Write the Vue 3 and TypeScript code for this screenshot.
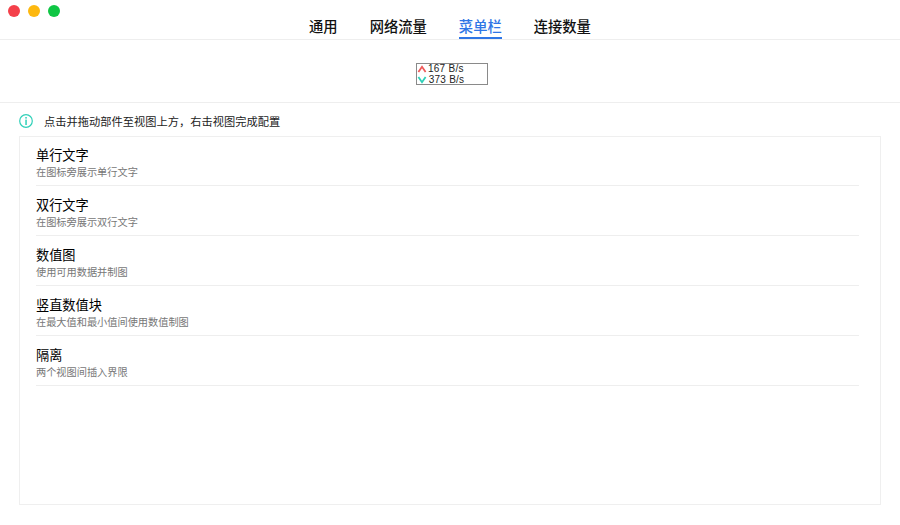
<script setup lang="ts">
const tabs = [
  { label: '通用', active: false },
  { label: '网络流量', active: false },
  { label: '菜单栏', active: true },
  { label: '连接数量', active: false },
]
const items = [
  { title: '单行文字', desc: '在图标旁展示单行文字' },
  { title: '双行文字', desc: '在图标旁展示双行文字' },
  { title: '数值图', desc: '使用可用数据并制图' },
  { title: '竖直数值块', desc: '在最大值和最小值间使用数值制图' },
  { title: '隔离', desc: '两个视图间插入界限' },
]
</script>

<template>
  <div class="window">
    <header class="titlebar">
      <div class="lights">
        <span class="light red"></span>
        <span class="light yellow"></span>
        <span class="light green"></span>
      </div>
      <nav class="tabs">
        <div v-for="t in tabs" :key="t.label" class="tab" :class="{ active: t.active }">{{ t.label }}</div>
      </nav>
    </header>
    <section class="preview">
      <div class="widget">
        <div class="line">
          <svg class="arrow" width="10" height="8" viewBox="0 0 10 8"><path d="M1.4 7 L5 1.8 L8.6 7" fill="none" stroke="#ef5a5a" stroke-width="1.8" /></svg>
          <span class="val">167 B/s</span>
        </div>
        <div class="line second">
          <svg class="arrow" width="10" height="8" viewBox="0 0 10 8"><path d="M1.4 1 L5 6.2 L8.6 1" fill="none" stroke="#2fd0b8" stroke-width="1.8" /></svg>
          <span class="val">373 B/s</span>
        </div>
      </div>
    </section>
    <div class="hint">
      <svg class="info" width="14" height="14" viewBox="0 0 14 14">
        <circle cx="7" cy="7" r="6.3" fill="none" stroke="#30d0b8" stroke-width="1.2" />
        <rect x="6.3" y="3" width="1.5" height="1.6" fill="#30d0b8" />
        <rect x="6.3" y="5.6" width="1.5" height="5.4" fill="#30d0b8" />
      </svg>
      <span>点击并拖动部件至视图上方，右击视图完成配置</span>
    </div>
    <div class="panel">
      <div v-for="it in items" :key="it.title" class="item">
        <div class="title">{{ it.title }}</div>
        <div class="desc">{{ it.desc }}</div>
      </div>
    </div>
  </div>
</template>

<style>
html, body { margin: 0; background: #fff; }
</style>

<style scoped>
.window {
  width: 900px;
  height: 525px;
  overflow: hidden;
  background: #fff;
  display: flex;
  flex-direction: column;
  font-family: "Noto Sans CJK SC", "Liberation Sans", sans-serif;
}
.titlebar {
  height: 40px;
  box-sizing: border-box;
  border-bottom: 1px solid #eeeeee;
  position: relative;
  flex: none;
}
.lights {
  position: absolute;
  left: 8px;
  top: 5px;
  display: flex;
  gap: 8px;
}
.light { width: 12px; height: 12px; border-radius: 50%; }
.red { background: #f4404a; }
.yellow { background: #fdb80f; }
.green { background: #0fc644; }
.tabs {
  display: flex;
  justify-content: center;
  gap: 32px;
  padding-top: 17px;
}
.tab {
  font-size: 14.3px;
  line-height: 18px;
  height: 22px;
  color: #111;
  font-weight: 500;
  box-sizing: border-box;
}
.tab.active {
  color: #2f76e6;
  border-bottom: 2px solid #2f76e6;
}
.preview {
  height: 63px;
  box-sizing: border-box;
  border-bottom: 1px solid #eeeeee;
  flex: none;
  display: flex;
  justify-content: center;
  padding-top: 23px;
}
.widget {
  width: 72px;
  height: 22px;
  box-sizing: border-box;
  border: 1px solid #8a8a8a;
  display: flex;
  flex-direction: column;
  margin-left: 4px;
}
.line {
  height: 10px;
  margin-bottom: 1px;
  display: flex;
  align-items: center;
}
.second .val { margin-left: 1.7px; }
.arrow { flex: none; }
.val {
  font-family: "Liberation Sans", sans-serif;
  font-size: 10px;
  line-height: 10px;
  color: #222;
  margin-left: 1px;
  letter-spacing: 0.25px;
}
.hint {
  height: 33px;
  box-sizing: border-box;
  padding-top: 2px;
  display: flex;
  align-items: center;
  padding-left: 19px;
  font-size: 11.25px;
  color: #222;
  flex: none;
}
.info { margin-right: 11px; flex: none; }
.panel {
  margin: 0 19px;
  height: 369px;
  border: 1px solid #efefef;
  box-sizing: border-box;
  padding: 0 21px 0 16px;
  flex: none;
}
.item {
  height: 50px;
  box-sizing: border-box;
  border-bottom: 1px solid #eeeeee;
  padding-top: 10px;
}
.item:first-child {
  height: 49px;
  padding-top: 9px;
}
.title {
  font-size: 13.2px;
  line-height: 18px;
  color: #000;
  font-weight: 400;
}
.desc {
  margin-top: 1px;
  font-size: 10.2px;
  line-height: 14px;
  color: #777;
}
</style>
